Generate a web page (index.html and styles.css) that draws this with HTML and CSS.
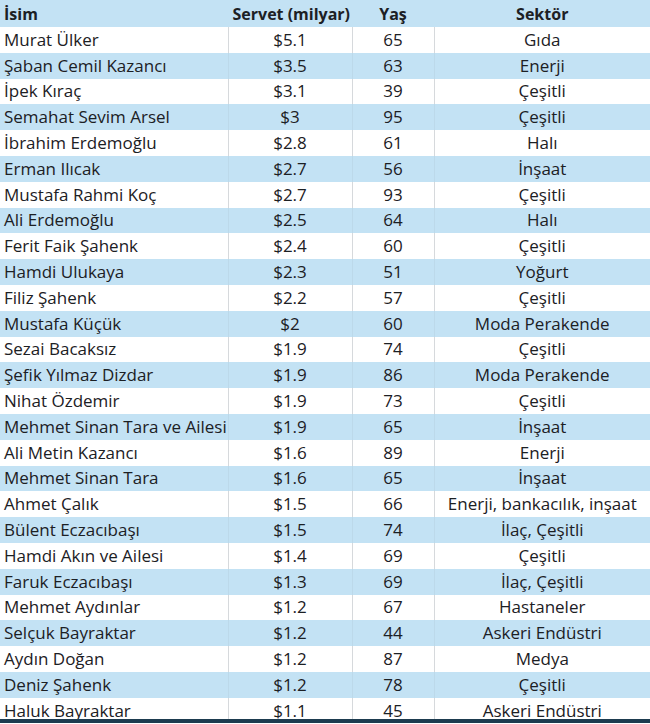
FILE: index.html
```html
<!DOCTYPE html>
<html lang="tr">
<head>
<meta charset="utf-8">
<link rel="stylesheet" href="styles.css">
</head>
<body>
<div class="frame">
<table class="sheet">
<colgroup><col class="c1"><col class="c2"><col class="c3"><col class="c4"></colgroup>
<thead>
<tr><th class="name">İsim</th><th>Servet (milyar)</th><th>Yaş</th><th>Sektör</th></tr>
</thead>
<tbody>
<tr><td class="name">Murat Ülker</td><td>$5.1</td><td>65</td><td>Gıda</td></tr>
<tr><td class="name">Şaban Cemil Kazancı</td><td>$3.5</td><td>63</td><td>Enerji</td></tr>
<tr><td class="name">İpek Kıraç</td><td>$3.1</td><td>39</td><td>Çeşitli</td></tr>
<tr><td class="name">Semahat Sevim Arsel</td><td>$3</td><td>95</td><td>Çeşitli</td></tr>
<tr><td class="name">İbrahim Erdemoğlu</td><td>$2.8</td><td>61</td><td>Halı</td></tr>
<tr><td class="name">Erman Ilıcak</td><td>$2.7</td><td>56</td><td>İnşaat</td></tr>
<tr><td class="name">Mustafa Rahmi Koç</td><td>$2.7</td><td>93</td><td>Çeşitli</td></tr>
<tr><td class="name">Ali Erdemoğlu</td><td>$2.5</td><td>64</td><td>Halı</td></tr>
<tr><td class="name">Ferit Faik Şahenk</td><td>$2.4</td><td>60</td><td>Çeşitli</td></tr>
<tr><td class="name">Hamdi Ulukaya</td><td>$2.3</td><td>51</td><td>Yoğurt</td></tr>
<tr><td class="name">Filiz Şahenk</td><td>$2.2</td><td>57</td><td>Çeşitli</td></tr>
<tr><td class="name">Mustafa Küçük</td><td>$2</td><td>60</td><td>Moda Perakende</td></tr>
<tr><td class="name">Sezai Bacaksız</td><td>$1.9</td><td>74</td><td>Çeşitli</td></tr>
<tr><td class="name">Şefik Yılmaz Dizdar</td><td>$1.9</td><td>86</td><td>Moda Perakende</td></tr>
<tr><td class="name">Nihat Özdemir</td><td>$1.9</td><td>73</td><td>Çeşitli</td></tr>
<tr><td class="name">Mehmet Sinan Tara ve Ailesi</td><td>$1.9</td><td>65</td><td>İnşaat</td></tr>
<tr><td class="name">Ali Metin Kazancı</td><td>$1.6</td><td>89</td><td>Enerji</td></tr>
<tr><td class="name">Mehmet Sinan Tara</td><td>$1.6</td><td>65</td><td>İnşaat</td></tr>
<tr><td class="name">Ahmet Çalık</td><td>$1.5</td><td>66</td><td>Enerji, bankacılık, inşaat</td></tr>
<tr><td class="name">Bülent Eczacıbaşı</td><td>$1.5</td><td>74</td><td>İlaç, Çeşitli</td></tr>
<tr><td class="name">Hamdi Akın ve Ailesi</td><td>$1.4</td><td>69</td><td>Çeşitli</td></tr>
<tr><td class="name">Faruk Eczacıbaşı</td><td>$1.3</td><td>69</td><td>İlaç, Çeşitli</td></tr>
<tr><td class="name">Mehmet Aydınlar</td><td>$1.2</td><td>67</td><td>Hastaneler</td></tr>
<tr><td class="name">Selçuk Bayraktar</td><td>$1.2</td><td>44</td><td>Askeri Endüstri</td></tr>
<tr><td class="name">Aydın Doğan</td><td>$1.2</td><td>87</td><td>Medya</td></tr>
<tr><td class="name">Deniz Şahenk</td><td>$1.2</td><td>78</td><td>Çeşitli</td></tr>
<tr><td class="name">Haluk Bayraktar</td><td>$1.1</td><td>45</td><td>Askeri Endüstri</td></tr>
</tbody>
</table>
</div>
</body>
</html>
```
FILE: styles.css
```css
html, body {
  margin: 0;
  padding: 0;
  background: #ffffff;
}
.frame {
  width: 650px;
  height: 719px;
  overflow: hidden;
  border-bottom: 4px solid #1d3b4f;
}
.sheet {
  width: 650px;
  border-collapse: collapse;
  table-layout: fixed;
  font-family: "Open Sans", "Liberation Sans", sans-serif;
  font-size: 17px;
  color: #1c2024;
}
.c1 { width: 228px; }
.c2 { width: 124px; }
.c3 { width: 82px; }
.c4 { width: 216px; }
.sheet th, .sheet td {
  padding: 0 4px;
  line-height: 20px;
  text-align: center;
  white-space: nowrap;
  overflow: hidden;
  border-left: 1px solid #d6d9dc;
}
.sheet th:first-child, .sheet td:first-child {
  border-left: none;
}
.sheet th {
  height: 27px;
  font-weight: bold;
  font-size: 16px;
  background: #c3e2f4;
  border-left-color: #c3e2f4;
}
.sheet td {
  height: 25.8px;
}
.sheet .name {
  text-align: left;
}
.sheet tbody tr:nth-child(even) td {
  background: #c3e2f4;
  border-left-color: #bcd9ea;
}
```
